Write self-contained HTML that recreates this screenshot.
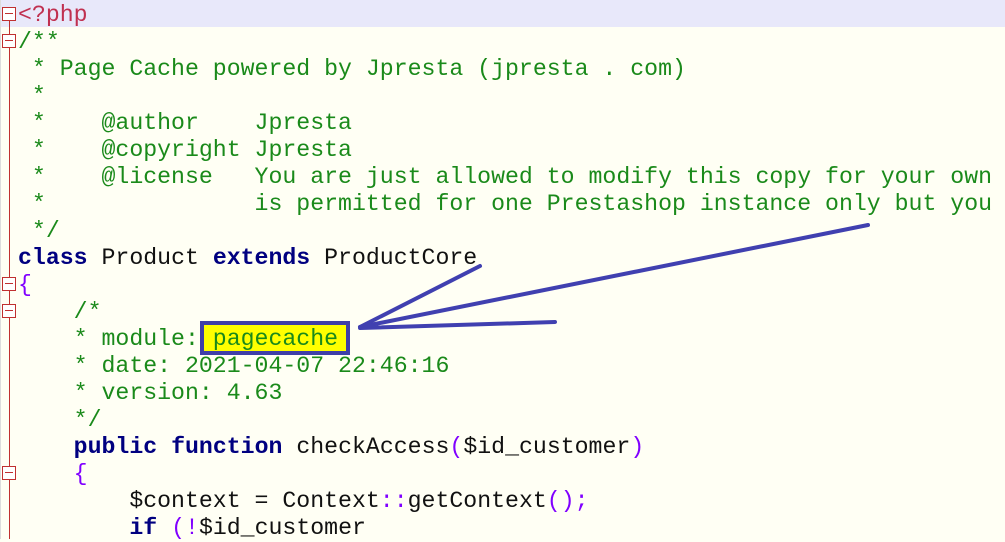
<!DOCTYPE html><html><head><meta charset="utf-8"><style>
body{margin:0;width:1005px;height:539px;overflow:hidden;background:#fffff4;position:relative;font-family:"Liberation Mono",monospace;font-size:23.2px}
.l{position:absolute;left:18px;height:27px;line-height:27px;white-space:pre;color:#111;margin-top:2px}
.c{color:#1a8a1a}.k{color:#000080;font-weight:bold}.p{color:#8000ff}
.f{position:absolute;left:2px;width:14px;height:14px;border:1px solid #c03030;background:#fff;box-sizing:border-box}
.f:after{content:"";position:absolute;left:2px;right:2px;top:5px;height:1px;background:#c03030}
</style></head><body>
<div style="position:absolute;left:0;top:0;width:1005px;height:27px;background:#e8e8fa"></div>
<div style="position:absolute;left:9px;top:8px;width:1px;height:531px;background:#c03030"></div>
<div style="position:absolute;left:0;top:0;width:1px;height:539px;background:#ddd"></div>
<div class="f" style="top:7px"></div><div class="f" style="top:34px"></div><div class="f" style="top:277px"></div><div class="f" style="top:304px"></div><div class="f" style="top:466px"></div>
<div class="l" style="top:0;color:#c03050">&lt;?php</div>
<div class="l c" style="top:27px">/**</div>
<div class="l c" style="top:54px"> * Page Cache powered by Jpresta (jpresta . com)</div>
<div class="l c" style="top:81px"> *</div>
<div class="l c" style="top:108px"> *    @author    Jpresta</div>
<div class="l c" style="top:135px"> *    @copyright Jpresta</div>
<div class="l c" style="top:162px"> *    @license   You are just allowed to modify this copy for your own use</div>
<div class="l c" style="top:189px"> *               is permitted for one Prestashop instance only but you</div>
<div class="l c" style="top:216px"> */</div>
<div class="l" style="top:243px"><span class="k">class</span> Product <span class="k">extends</span> ProductCore</div>
<div class="l p" style="top:270px">{</div>
<div class="l c" style="top:297px">    /*</div>
<div style="position:absolute;left:200px;top:321px;width:150px;height:34px;background:#ffff00;border:4px solid #3f3fa8;box-sizing:border-box"></div>
<div class="l c" style="top:324px">    * module: pagecache</div>
<div class="l c" style="top:351px">    * date: 2021-04-07 22:46:16</div>
<div class="l c" style="top:378px">    * version: 4.63</div>
<div class="l c" style="top:405px">    */</div>
<div class="l" style="top:432px">    <span class="k">public</span> <span class="k">function</span> checkAccess<span class="p">(</span>$id_customer<span class="p">)</span></div>
<div class="l p" style="top:459px">    {</div>
<div class="l" style="top:486px">        $context = Context<span class="p">::</span>getContext<span class="p">();</span></div>
<div class="l" style="top:513px">        <span class="k">if</span> <span class="p">(!</span>$id_customer</div>
<svg width="1005" height="539" style="position:absolute;left:0;top:0">
<g stroke="#4040b0" stroke-width="4" fill="none" stroke-linecap="round">
<line x1="868" y1="225" x2="360" y2="327"/>
<line x1="480" y1="266" x2="360" y2="327"/>
<line x1="555" y1="322" x2="360" y2="328"/>
</g></svg>
</body></html>
